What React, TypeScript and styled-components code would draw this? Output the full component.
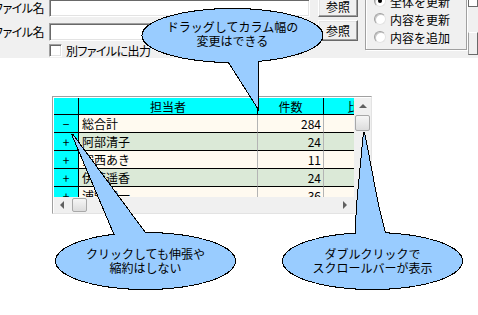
import React from "react";
import styled, { createGlobalStyle } from "styled-components";

const Global = createGlobalStyle`
  html, body { margin: 0; padding: 0; background: #fff; overflow: hidden; }
  body {
    font-family: "Noto Sans CJK JP", "Noto Sans", sans-serif;
    font-size: 12px;
    color: #000;
  }
`;

const Page = styled.div`
  position: relative;
  width: 478px;
  height: 315px;
  overflow: hidden;
  background: #fff;
`;

/* ---------- top form panel ---------- */
const Panel = styled.div`
  height: 58px;
  background: #f0f0f0;
  overflow: hidden;
  display: flex;
  align-items: flex-start;
`;

const Form = styled.div`
  margin-top: -5px;
  display: grid;
  grid-template-columns: 49px 269px 40px;
  grid-template-rows: 22px 21px 13px;
  row-gap: 3px;
  align-items: end;
`;

const Label = styled.div`
  width: 44px;
  height: 18px;
  line-height: 18px;
  display: flex;
  justify-content: flex-end;
  white-space: nowrap;
  font-feature-settings: "palt";
  letter-spacing: -0.5px;
`;

const TextField = styled.div`
  box-sizing: border-box;
  width: 261px;
  height: 18px;
  background: #fff;
  border: 1px solid;
  border-color: #a0a0a0 #fff #fff #a0a0a0;
  box-shadow: inset 1px 1px 0 #696969, inset -1px -1px 0 #e3e3e3;
`;

const Button = styled.div<{ $h: number }>`
  box-sizing: border-box;
  width: 40px;
  height: ${(p) => p.$h}px;
  background: #f0f0f0;
  border: 1px solid;
  border-color: #fff #696969 #696969 #fff;
  box-shadow: inset -1px -1px 0 #a0a0a0, inset 1px 1px 0 #e3e3e3;
  display: flex;
  align-items: center;
  justify-content: center;
  line-height: 14px;
`;

const CheckRow = styled.div`
  grid-column: 2 / 4;
  display: flex;
  align-items: center;
  gap: 4px;
  height: 13px;
  white-space: nowrap;
  font-feature-settings: "palt";
  letter-spacing: -0.6px;
`;

const CheckBox = styled.div`
  box-sizing: border-box;
  width: 13px;
  height: 13px;
  background: #fff;
  border: 1px solid;
  border-color: #a0a0a0 #fff #fff #a0a0a0;
  box-shadow: inset 1px 1px 0 #696969, inset -1px -1px 0 #e3e3e3;
`;

const RadioGroup = styled.div`
  box-sizing: border-box;
  margin-top: -12px;
  margin-left: 7px;
  width: 107px;
  height: 62px;
  padding: 3px 0 3px 8px;
  border: 1px solid #a0a0a0;
  box-shadow: inset 1px 1px 0 #fff, 1px 1px 0 #fff;
  display: flex;
  flex-direction: column;
`;

const RadioRow = styled.div`
  height: 18px;
  display: flex;
  align-items: center;
  gap: 4px;
  white-space: nowrap;
`;

const Radio = styled.div<{ $on?: boolean }>`
  box-sizing: border-box;
  width: 12px;
  height: 12px;
  border-radius: 50%;
  background: #fff;
  border: 1px solid;
  border-color: #a0a0a0 #e3e3e3 #e3e3e3 #a0a0a0;
  box-shadow: inset 1px 1px 0 #c8c8c8;
  display: flex;
  align-items: center;
  justify-content: center;
  &::after {
    content: "";
    width: 4px;
    height: 4px;
    border-radius: 50%;
    background: ${(p) => (p.$on ? "#000" : "transparent")};
  }
`;

const Stubs = styled.div`
  margin-left: 1px;
  display: flex;
  flex-direction: column;
`;

const StubBox = styled.div`
  box-sizing: border-box;
  margin-top: -5px;
  width: 10px;
  height: 12px;
  background: #fff;
  border: 1px solid #696969;
`;

const StubButton = styled.div`
  box-sizing: border-box;
  margin-top: 25px;
  width: 10px;
  height: 23px;
  background: #f0f0f0;
  border: 1px solid;
  border-color: #fff #696969 #696969 #a0a0a0;
`;

/* ---------- grid control ---------- */
const GridFrame = styled.div`
  box-sizing: border-box;
  margin: 38px 0 0 52px;
  width: 320px;
  height: 118px;
  background: #fff;
  border: 1px solid;
  border-color: #a0a0a0 #e3e3e3 #e3e3e3 #a0a0a0;
  padding: 1px 0 0 1px;
  display: grid;
  grid-template-columns: 300px 17px;
  grid-template-rows: 99px 16px;
`;

const DataArea = styled.div`
  overflow: hidden;
`;

const Table = styled.div`
  display: grid;
  grid-template-columns: 25px 179px 66px 72px;
  width: 342px;
`;

const HeadCell = styled.div`
  box-sizing: border-box;
  height: 17px;
  background: #00ffff;
  border-right: 1px solid #000;
  border-bottom: 1px solid #000;
  display: flex;
  align-items: center;
  justify-content: center;
  white-space: nowrap;
  overflow: hidden;
`;

const RowHead = styled.div`
  box-sizing: border-box;
  height: 18px;
  background: #00ffff;
  border-right: 1px solid #000;
  border-bottom: 1px solid #000;
  display: flex;
  align-items: center;
  justify-content: center;
`;

const DataCell = styled.div<{ $tone: string; $right?: boolean }>`
  box-sizing: border-box;
  height: 18px;
  background: ${(p) => p.$tone};
  border-right: 1px solid #b4b4b4;
  border-bottom: 1px solid #000;
  display: flex;
  align-items: center;
  justify-content: ${(p) => (p.$right ? "flex-end" : "flex-start")};
  padding: 0 2px 0 3px;
  white-space: nowrap;
  overflow: hidden;
`;

const VScroll = styled.div`
  background: #f0f0f0;
  display: flex;
  flex-direction: column;
  align-items: center;
  padding-top: 6px;
  gap: 7px;
`;

const HScroll = styled.div`
  background: #f0f0f0;
  display: flex;
  align-items: center;
  padding: 0 7px 0 6px;
  gap: 8px;
`;

const Corner = styled.div`
  background: #f0f0f0;
`;

const Arrow = styled.div<{ $dir: "up" | "left" | "right" }>`
  width: 0;
  height: 0;
  border-style: solid;
  border-color: transparent;
  ${(p) =>
    p.$dir === "up"
      ? "border-width: 0 4px 4px 4px; border-bottom-color: #606060;"
      : p.$dir === "left"
      ? "border-width: 4px 4px 4px 0; border-right-color: #606060;"
      : "border-width: 4px 0 4px 4px; border-left-color: #606060;"}
`;

const Thumb = styled.div<{ $w: number; $h: number }>`
  box-sizing: border-box;
  width: ${(p) => p.$w}px;
  height: ${(p) => p.$h}px;
  border: 1px solid #a8a8a8;
  border-radius: 2px;
  background: linear-gradient(#f6f6f6, #dcdcdc);
`;

const Spacer = styled.div`
  flex: 1;
`;

/* ---------- callouts ---------- */
const Shape = styled.svg`
  position: absolute;
  left: 0;
  top: 0;
  width: 478px;
  height: 315px;
  pointer-events: none;
`;

const BubbleText = styled.div<{ $x: number; $y: number; $w: number; $h: number }>`
  position: absolute;
  left: ${(p) => p.$x}px;
  top: ${(p) => p.$y}px;
  width: ${(p) => p.$w}px;
  height: ${(p) => p.$h}px;
  display: flex;
  flex-direction: column;
  align-items: center;
  justify-content: center;
  text-align: center;
  font-size: 12px;
  line-height: 14px;
  white-space: nowrap;
  color: #000;
`;

type CalloutProps = {
  cx: number;
  cy: number;
  rx: number;
  ry: number;
  tail: string;
  lines: string[];
  dy?: number;
};

function Callout({ cx, cy, rx, ry, tail, lines, dy = 0 }: CalloutProps) {
  return (
    <>
      <Shape viewBox="0 0 478 315" shapeRendering="crispEdges">
        <polygon points={tail} fill="#99ccff" stroke="#000" strokeWidth={2} />
        <ellipse cx={cx} cy={cy} rx={rx} ry={ry} fill="#99ccff" stroke="#000" strokeWidth={2} />
        <polygon points={tail} fill="#99ccff" />
        <ellipse cx={cx} cy={cy} rx={rx} ry={ry} fill="#99ccff" />
      </Shape>
      <BubbleText $x={cx - rx} $y={cy - ry + dy} $w={rx * 2} $h={ry * 2}>
        {lines.map((l) => (
          <span key={l}>{l}</span>
        ))}
      </BubbleText>
    </>
  );
}

const rows = [
  { mark: "−", name: "総合計", count: 284 },
  { mark: "+", name: "阿部清子", count: 24 },
  { mark: "+", name: "安西あき", count: 11 },
  { mark: "+", name: "伊藤遥香", count: 24 },
  { mark: "+", name: "浦野健一", count: 36 },
];

export default function App() {
  return (
    <Page>
      <Global />
      <Panel>
        <Form>
          <Label>ファイル名</Label>
          <TextField />
          <Button $h={21}>参照</Button>
          <Label>ファイル名</Label>
          <TextField />
          <Button $h={21}>参照</Button>
          <div />
          <CheckRow>
            <CheckBox />
            <span>別ファイルに出力</span>
          </CheckRow>
        </Form>
        <RadioGroup>
          <RadioRow>
            <Radio $on />
            <span>全体を更新</span>
          </RadioRow>
          <RadioRow>
            <Radio />
            <span>内容を更新</span>
          </RadioRow>
          <RadioRow>
            <Radio />
            <span>内容を追加</span>
          </RadioRow>
        </RadioGroup>
        <Stubs>
          <StubBox />
          <StubButton />
        </Stubs>
      </Panel>

      <GridFrame>
        <DataArea>
          <Table>
            <HeadCell />
            <HeadCell>担当者</HeadCell>
            <HeadCell>件数</HeadCell>
            <HeadCell>比率</HeadCell>
            {rows.map((r, i) => {
              const tone = i % 2 === 0 ? "#fffaf0" : "#dbe9d7";
              return (
                <React.Fragment key={r.name}>
                  <RowHead>{r.mark}</RowHead>
                  <DataCell $tone={tone}>{r.name}</DataCell>
                  <DataCell $tone={tone} $right>
                    {r.count}
                  </DataCell>
                  <DataCell $tone={tone} />
                </React.Fragment>
              );
            })}
          </Table>
        </DataArea>
        <VScroll>
          <Arrow $dir="up" />
          <Thumb $w={15} $h={16} />
        </VScroll>
        <HScroll>
          <Arrow $dir="left" />
          <Thumb $w={15} $h={14} />
          <Spacer />
          <Arrow $dir="right" />
        </HScroll>
        <Corner />
      </GridFrame>

      <Callout
        cx={232.5}
        cy={35.5}
        rx={90}
        ry={26.5}
        tail="221,50 258,50 258,108"
        lines={["ドラッグしてカラム幅の", "変更はできる"]}
        dy={-2}
      />
      <Callout
        cx={145.5}
        cy={261}
        rx={89.5}
        ry={28}
        tail="72,134 119,245 154,245"
        lines={["クリックしても伸張や", "縮約はしない"]}
      />
      <Callout
        cx={372.5}
        cy={261}
        rx={89.5}
        ry={28}
        tail="364,132 357,205 355,245 388,245 378,205"
        lines={["ダブルクリックで", "スクロールバーが表示"]}
      />
    </Page>
  );
}
